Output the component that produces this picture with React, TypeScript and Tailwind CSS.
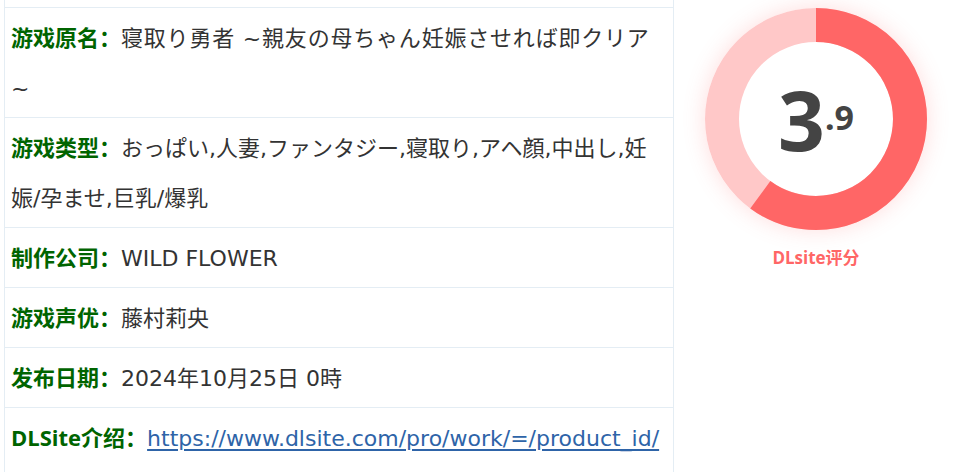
const rows: { label: string; value: React.ReactNode }[] = [
  {
    label: "游戏原名：",
    value: <span className="tracking-[0.8px]">寝取り勇者 ~親友の母ちゃん妊娠させれば即クリア ~</span>,
  },
  {
    label: "游戏类型：",
    value: "おっぱい,人妻,ファンタジー,寝取り,アヘ顔,中出し,妊娠/孕ませ,巨乳/爆乳",
  },
  { label: "制作公司：", value: "WILD FLOWER" },
  { label: "游戏声优：", value: "藤村莉央" },
  { label: "发布日期：", value: "2024年10月25日 0時" },
  {
    label: "DLSite介绍：",
    value: (
      <a href="#" className="text-[#2e64a8] underline underline-offset-[3px]">
        https://www.dlsite.com/pro/work/=/product_id/
      </a>
    ),
  },
];

function ScoreRing({ score, percent }: { score: string; percent: number }) {
  const r = 94;
  const c = 2 * Math.PI * r;
  const [whole, frac] = score.split(".");
  return (
    <div className="flex flex-col items-center pt-[8px]">
      <div className="relative h-[222px] w-[222px] rounded-full shadow-[0_0_22px_rgba(255,102,102,0.22)]">
        <svg width="222" height="222" viewBox="0 0 222 222">
          <circle cx="111" cy="111" r={r} fill="none" stroke="#ffc8c8" strokeWidth="34" />
          <circle
            cx="111"
            cy="111"
            r={r}
            fill="none"
            stroke="#ff6666"
            strokeWidth="34"
            strokeDasharray={`${c * percent} ${c}`}
            transform="rotate(-90 111 111)"
          />
        </svg>
        <div className="absolute inset-0 flex items-center justify-center font-['Noto_Sans',sans-serif] font-bold text-[#444]">
          <span className="text-[82px] leading-none">{whole}</span>
          <span className="relative top-[-2px] text-[34px] leading-none">.{frac}</span>
        </div>
      </div>
      <div className="mt-[15px] font-['Open_Sans','Noto_Sans_CJK_SC',sans-serif] text-[17px] font-bold text-[#ff6666]">
        DLsite评分
      </div>
    </div>
  );
}

export default function App() {
  return (
    <div className="flex h-[472px] w-[958px] overflow-hidden bg-white font-['DejaVu_Sans','Noto_Sans_CJK_SC','Noto_Sans_CJK_JP',sans-serif]">
      <div className="ml-[4px] w-[670px] shrink-0 border-x border-[#e4edf4]">
        <div className="h-[7px]" />
        {rows.map((row) => (
          <div
            key={row.label}
            className="border-t border-[#e4edf4] px-[6px] pt-[4px] pb-[3px] text-[22px] leading-[50px] text-[#333]"
          >
            <span className="font-['Open_Sans','Noto_Sans_CJK_SC',sans-serif] font-bold text-[#006400]">
              {row.label}
            </span>
            {row.value}
          </div>
        ))}
      </div>
      <div className="flex flex-1 justify-center">
        <ScoreRing score="3.9" percent={0.6} />
      </div>
    </div>
  );
}
